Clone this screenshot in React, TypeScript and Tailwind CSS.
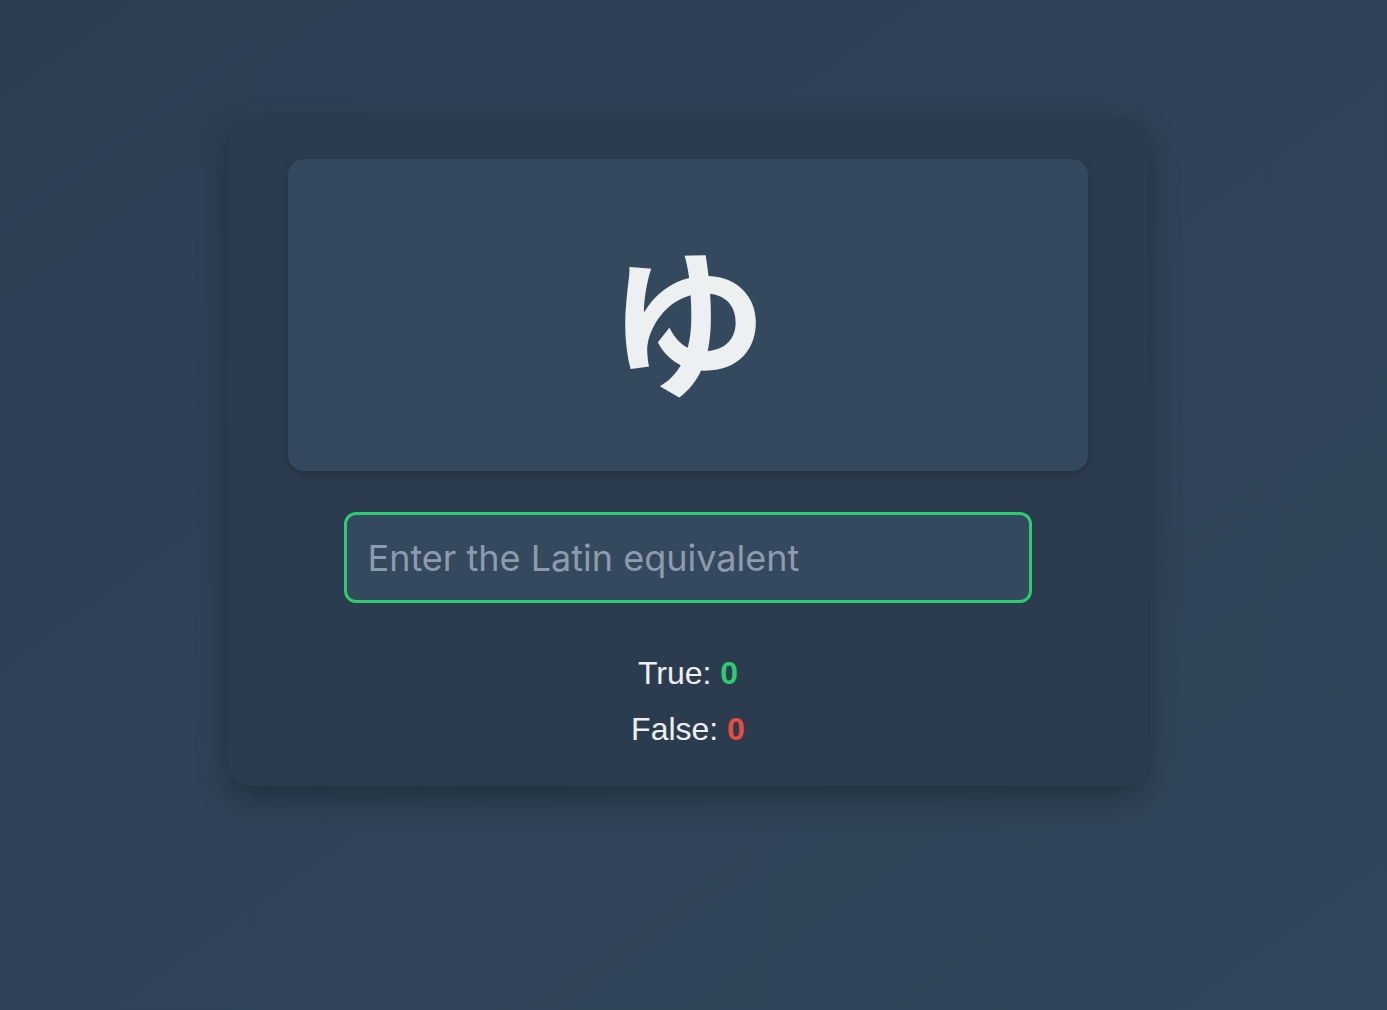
import { useState } from "react";

export default function App() {
  const [answer, setAnswer] = useState("");
  const [correct] = useState(0);
  const [wrong] = useState(0);

  return (
    <div className="min-h-[1010px] w-full bg-gradient-to-br from-[#2d3e53] via-[#2f4257] to-[#31465a] pt-[118px] pr-[11px] font-['Liberation_Sans',sans-serif]">
      <div className="mx-auto w-[920px] rounded-[24px] bg-[#2c3c4f] px-[60px] pt-[41px] pb-[29px] shadow-[0_12px_32px_rgba(0,0,0,0.28)]">
        {/* kana card */}
        <div className="flex h-[312px] items-center justify-center rounded-[16px] bg-[#34495e] shadow-[0_4px_12px_rgba(0,0,0,0.18)]">
          <span className="pt-[0px] font-['Noto_Sans_CJK_JP',sans-serif] text-[160px] font-bold leading-none text-[#ecf0f1]">
            ゆ
          </span>
        </div>

        <div className="mt-[41px] flex justify-center pr-[1px]">
          <input
            autoFocus
            value={answer}
            onChange={(e) => setAnswer(e.target.value)}
            placeholder="Enter the Latin equivalent"
            className="h-[91px] w-[688px] rounded-[12px] border-[3px] border-[#2ecc71] bg-[#34495e] px-[21px] font-['Inter',sans-serif] text-[36px] text-[#ecf0f1] caret-[#ecf0f1] outline-none placeholder:text-[#8e9bab]"
          />
        </div>

        <div className="mt-[42px] flex flex-col items-center text-[32px] leading-[56px] text-[#ecf0f1]">
          <p>
            True: <span className="font-bold text-[#2ecc71]">{correct}</span>
          </p>
          <p>
            False: <span className="font-bold text-[#e74c3c]">{wrong}</span>
          </p>
        </div>
      </div>
    </div>
  );
}
